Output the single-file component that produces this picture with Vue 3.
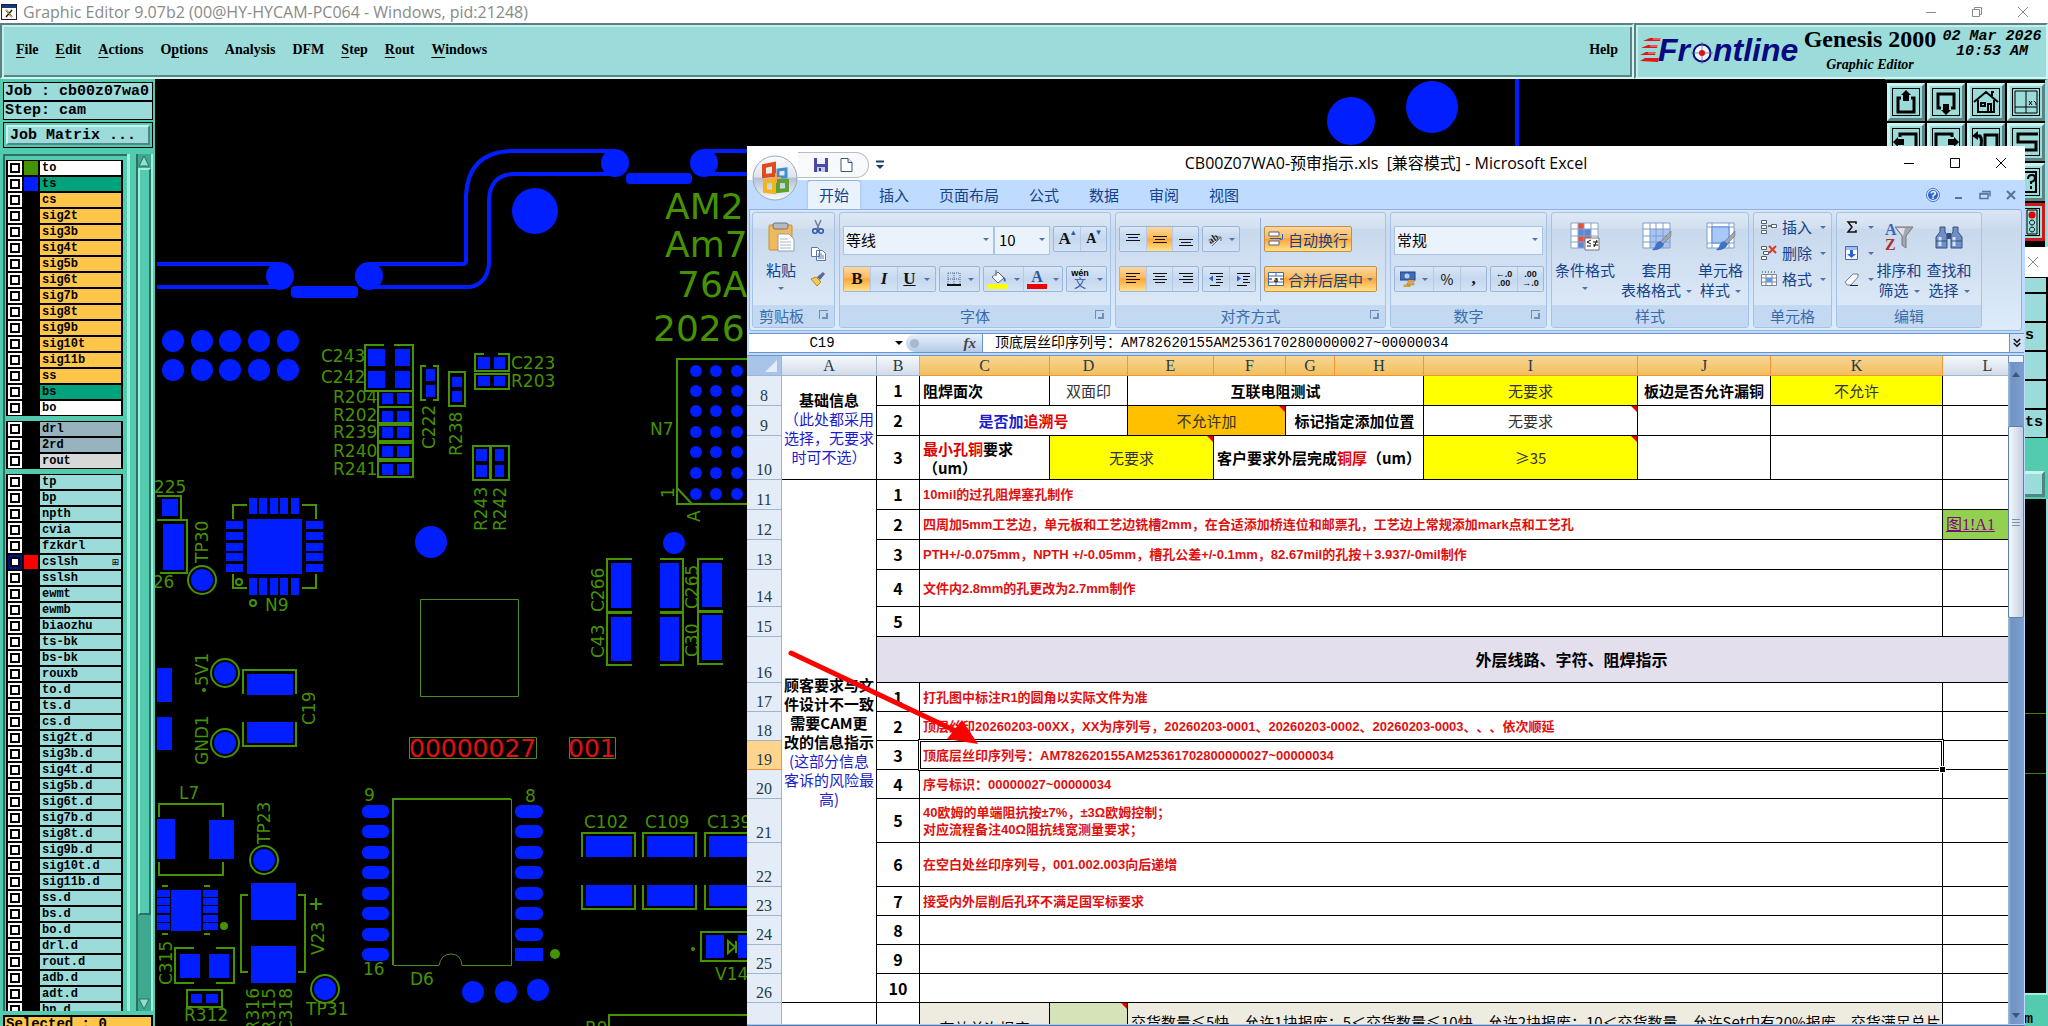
<template>
  <div class="desktop">
    <header class="titlebar">
      <svg class="titlebar-icon" viewBox="0 0 16 16"><rect x="0.500" y="0.500" width="15" height="15" fill="#fff" stroke="#222" /><path d="M1 2.500h14" stroke="#123a8a" stroke-width="3" /><path d="M5 6l6 7M11 6l-6 7" stroke="#222" stroke-width="1.500" /><path d="M5 6l6 7" stroke="#e8d800" stroke-width="1" /></svg>
      <span class="titlebar-text">Graphic Editor 9.07b2 (00@HY-HYCAM-PC064 - Windows, pid:21248)</span>
      <div class="win-controls win-controls-muted">
        <button type="button" aria-label="Minimize"><svg viewBox="0 0 12 12"><path d="M1 6.500h10" /></svg></button>
        <button type="button" aria-label="Restore"><svg viewBox="0 0 12 12"><path d="M3.500 3.500v-2h7v7h-2M1.500 3.500h7v7h-7z" /></svg></button>
        <button type="button" aria-label="Close"><svg viewBox="0 0 12 12"><path d="M1 1l10 10M11 1L1 11" /></svg></button>
      </div>
    </header>

    <div class="menubar">
      <nav class="menu-panel">
        <button v-for="m in menus" :key="m.name" type="button" class="menu-item">{{ m.before }}<u v-if="m.key">{{ m.key }}</u>{{ m.after }}</button>
        <button type="button" class="menu-item menu-help">Help</button>
      </nav>
      <div class="brand-panel">
        <svg class="brand-logo" viewBox="0 -4 162 40">
          <path d="M21 3H10L3 6h17zM18 10H8l-7 3h16zM16 17H6l-6 3h15zM14 23H5l-5 3 18 1 1-4z" fill="#e01818" />
          <path d="M13 4h8M10 11h8M8 18h8" stroke="#fff" stroke-width="0.600" />
          <text x="18" y="26">Fr</text>
          <circle cx="62" cy="18" r="8.500" fill="#e8f6f6" stroke="#0a0a80" stroke-width="2" />
          <path d="M62 7v22M51 18h22" stroke="#5a5ab0" stroke-width="0.700" />
          <circle cx="62" cy="18" r="3" fill="#e01010" />
          <text x="73" y="26">ntline</text>
        </svg>
        <div class="brand-name">
          <strong>Genesis 2000</strong>
          <em>Graphic Editor</em>
        </div>
        <div class="brand-date">02 Mar 2026<br>10:53 AM</div>
      </div>
    </div>

    <div class="workspace">
      <aside class="side">
        <div class="side-box">Job : cb00z07wa0</div>
        <div class="side-box">Step: cam</div>
        <div class="side-matrix"><button type="button">Job Matrix ...</button></div>
        <div class="side-layers">
          <div class="layer-frame">
            <div class="layer-list">
              <div v-for="(group, g) in layerGroups" :key="g" class="layer-group">
                <label v-for="layer in group" :key="layer.name" class="layer">
                  <span class="layer-check" :class="{ 'layer-check-on': layer.active }"><input type="checkbox"></span>
                  <span class="layer-swatch" :style="{ background: layer.swatch }"></span>
                  <span class="layer-name" :class="'layer-' + layer.type">{{ layer.name }}<i v-if="layer.active">⊞</i></span>
                </label>
              </div>
            </div>
          </div>
          <div class="side-scroll">
            <svg viewBox="0 0 12 12"><path d="M6 1L1 11h10z" fill="#8fe0cc" stroke="#2e6f60" /></svg>
            <div class="side-thumb"></div>
            <div class="side-trough"></div>
            <svg viewBox="0 0 12 12"><path d="M1 1h10L6 11z" fill="#8fe0cc" stroke="#2e6f60" /></svg>
          </div>
        </div>
        <div class="side-status">Selected : 0</div>
      </aside>

      <!-- board view, drawn in screen coordinates -->
      <svg class="board">
        <g transform="translate(-155 -79)">
          <g class="trace">
            <path d="M157 264H280M370 264H463Q466 264 466 260V196Q468 152 512 151H612M157 287H280M370 287H470Q487 284 489 264V200Q490 175 513 174H612M704 151H760M704 174H760" />
            <path d="M1517 79V160" />
          </g>
          <g class="pad">
            <rect v-for="(r, i) in pads" :key="'p' + i" :x="r[0]" :y="r[1]" :width="r[2] - r[0]" :height="r[3] - r[1]" />
            <circle v-for="(c, i) in dots" :key="'d' + i" :cx="c[0]" :cy="c[1]" :r="c[2]" />
            <rect x="291" y="286" width="67" height="12" rx="4" />
            <rect x="626" y="173" width="66" height="11" rx="4" />
            <template v-for="(y, i) in dipRows" :key="'dip' + i">
              <rect x="362" :y="y - 6" width="27" height="13" rx="6" />
              <rect x="515" :y="y - 6" width="28" height="13" :rx="i === 7 ? 0 : 6" />
            </template>
          </g>
          <g class="silk">
            <path v-for="(d, i) in silk" :key="'s' + i" :d="d" />
            <circle v-for="(c, i) in testPoints" :key="'t' + i" :cx="c[0]" :cy="c[1]" r="14" />
            <circle cx="239" cy="582" r="3" />
            <circle cx="253" cy="603" r="3" />
          </g>
          <g class="silk-thin">
            <path d="M420.500 599.500H518.500V696.500H420.500zM409.500 737.500H536.500V758.500H409.500zM569.500 737.500H615.500V758.500H569.500zM393.500 965.500H439Q441 954 451 954T462 965.500H511.500V799" />
          </g>
          <g class="silk-fill">
            <circle cx="204" cy="690" r="2" />
            <circle cx="224" cy="926" r="4" />
            <circle cx="555" cy="954" r="5" />
            <circle cx="693" cy="949" r="2" />
            <text v-for="l in boardTitles" :key="l[0]" class="board-title" :x="l[1]" :y="l[2]">{{ l[0] }}</text>
            <text v-for="(l, i) in labels" :key="'l' + i" :x="l[1]" :y="l[2]">{{ l[0] }}</text>
            <text v-for="(l, i) in verticalLabels" :key="'v' + i" :transform="`translate(${l[1]} ${l[2]}) rotate(-90)`" :text-anchor="l[3] || 'start'">{{ l[0] }}</text>
          </g>
          <g class="serial">
            <text x="409" y="757">00000027</text>
            <text x="568" y="757">001</text>
          </g>
        </g>
      </svg>

      <aside class="tools">
        <div class="tool-grid">
          <button v-for="(icon, i) in toolIcons" :key="i" type="button" class="tool" :class="{ 'tool-red': i === 15 }" :aria-label="icon.name">
            <svg viewBox="0 0 28 28"><rect x="0.500" y="0.500" width="27" height="27" fill="none" stroke="#000" /><path :d="icon.line" fill="none" stroke="#000" :stroke-width="icon.w || 2" /><path :d="icon.solid" fill="#000" /><circle v-if="i === 15" cx="20" cy="7" r="3.500" fill="#e00000" /></svg>
          </button>
        </div>
        <div class="popup-title"><button type="button" aria-label="Close popup"><svg viewBox="0 0 12 12"><path d="M1 1l10 10M11 1L1 11" /></svg></button></div>
        <div class="popup-rows">
          <div class="popup-row popup-row-short"></div>
          <div class="popup-row"></div>
          <div class="popup-row"><span>s</span></div>
          <div class="popup-row"></div>
          <div class="popup-row"></div>
          <div class="popup-row"><span>ts</span></div>
        </div>
        <div class="popup-foot"><button type="button" aria-label="Apply"></button></div>
        <div class="tools-board"><svg><path d="M0 214.500H163M0 274.500H163" stroke="#3f7d10" /></svg></div>
        <div class="tools-foot"><span>m</span></div>
      </aside>
    </div>

    <section class="excel">
      <div class="x-title">
        <button type="button" class="office" aria-label="Office">
          <svg viewBox="0 0 46 46">
            <defs>
              <linearGradient id="orb" x1="0" y1="0" x2="0" y2="1"><stop offset="0" stop-color="#fdfdfe" /><stop offset="0.480" stop-color="#dfe4ec" /><stop offset="0.500" stop-color="#b6c0d2" /><stop offset="1" stop-color="#f6fafe" /></linearGradient>
            </defs>
            <circle cx="23" cy="23" r="22" fill="url(#orb)" stroke="#9aa7bd" />
            <path d="M12 11l10-2v11l-10 1z" fill="none" stroke="#dd4b1e" stroke-width="4" />
            <path d="M26 15l8-1v8h-8z" fill="none" stroke="#3c8fd0" stroke-width="3" />
            <path d="M13 26h9v11l-9-1z" fill="none" stroke="#f0b41c" stroke-width="4" />
            <path d="M26 26h9v9l-9 1z" fill="none" stroke="#5da032" stroke-width="4" />
            <path d="M19 23h10M24 18v10" stroke="#f4a060" stroke-width="2" />
          </svg>
        </button>
        <div class="qat">
          <button type="button" aria-label="Save"><svg viewBox="0 0 16 16"><path d="M1 1h14v14H1z" fill="#4a49a8" /><path d="M4 1h8v6H4z" fill="#eef2fb" /><path d="M4 10h8v5H4z" fill="#c4c8e4" /><path d="M6 11h2v3H6z" fill="#33337f" /></svg></button>
          <button type="button" aria-label="New"><svg viewBox="0 0 16 16"><path d="M3 1.500h7l4 4v9H3z" fill="#fff" stroke="#3d5579" /><path d="M10 1.500v4h4" fill="#dbe4ef" stroke="#3d5579" /></svg></button>
        </div>
        <button type="button" class="qat-more" aria-label="Customize"><svg viewBox="0 0 10 10"><path d="M1 1.500h8" stroke="#1c3a70" stroke-width="2" /><path d="M1 5h8L5 9z" fill="#1c3a70" /></svg></button>
        <span class="x-title-text">CB00Z07WA0-预审指示.xls&nbsp; [兼容模式] - Microsoft Excel</span>
        <div class="win-controls">
          <button type="button" aria-label="Minimize Excel"><svg viewBox="0 0 12 12"><path d="M1 6.500h10" /></svg></button>
          <button type="button" aria-label="Maximize Excel"><svg viewBox="0 0 12 12"><path d="M1.500 1.500h9v9h-9z" /></svg></button>
          <button type="button" aria-label="Close Excel"><svg viewBox="0 0 12 12"><path d="M1 1l10 10M11 1L1 11" /></svg></button>
        </div>
      </div>

      <div class="x-tabs">
        <button v-for="(t, i) in tabs" :key="t" type="button" class="x-tab" :class="{ 'x-tab-on': i === 0 }">{{ t }}</button>
        <div class="x-tabs-right">
          <svg viewBox="0 0 14 14"><circle cx="7" cy="7" r="6.500" fill="#eaf2fd" stroke="#4472c4" /><circle cx="7" cy="7" r="5" fill="#2a62d0" /><text x="7" y="11" text-anchor="middle" font-size="11" font-weight="bold" fill="#fff" font-family="Liberation Sans">?</text></svg>
          <svg viewBox="0 0 14 14"><path d="M3 10h7" stroke="#5c7393" stroke-width="2" /></svg>
          <svg viewBox="0 0 14 14"><path d="M4 3.500h8v5M2 5.500h8v5H2zM2 6h8" stroke="#5c7393" stroke-width="1.500" fill="none" /></svg>
          <svg viewBox="0 0 14 14"><path d="M3 3l8 8M11 3l-8 8" stroke="#5c7393" stroke-width="2" /></svg>
        </div>
      </div>

      <div class="ribbon">
        <div class="group group-clip">
          <div class="group-body">
            <button type="button" class="big">
              <svg class="icon-big" viewBox="0 0 30 30"><rect x="3" y="3" width="23" height="25" rx="1" fill="#f0b95a" stroke="#c98f35" /><rect x="7" y="1" width="15" height="6" rx="2" fill="#b5b9c0" stroke="#6c7480" /><path d="M12 12h11l5 5v12H12z" fill="#fff" stroke="#8fa0b8" /><path d="M14 17h8M14 20h11M14 23h11M14 26h11" stroke="#a9b8cf" /></svg>
              <span>粘贴</span><i class="caret"></i>
            </button>
            <div class="small-col">
              <button type="button" aria-label="剪切"><svg class="icon" viewBox="0 0 16 16"><path d="M5 1l4 9M11 1L7 10" stroke="#6f7e96" stroke-width="1.500" /><circle cx="5" cy="12" r="2.300" fill="none" stroke="#2d55a8" stroke-width="1.500" /><circle cx="11" cy="12" r="2.300" fill="none" stroke="#2d55a8" stroke-width="1.500" /></svg></button>
              <button type="button" aria-label="复制"><svg class="icon" viewBox="0 0 16 16"><path d="M1.500 2.500h6l2 2v7h-8zM6.500 5.500h6l3 3v7h-9z" fill="#fff" stroke="#5577ad" /><path d="M8 9h4M8 11h6M8 13h6" stroke="#5577ad" /></svg></button>
              <button type="button" aria-label="格式刷"><svg class="icon" viewBox="0 0 16 16"><path d="M1 8l5-2 5 5-4 4z" fill="#f3cb4e" stroke="#b5862a" /><path d="M7 6l6-5 2 2-5 6z" fill="#5d6798" /></svg></button>
            </div>
          </div>
          <div class="group-label">剪贴板<i class="launcher"></i></div>
        </div>

        <div class="group group-font">
          <div class="group-body group-rows">
            <div class="tool-row">
              <div class="combo-pair">
                <div class="combo combo-font"><select aria-label="字体"><option>等线</option></select><i class="caret"></i></div>
                <div class="combo combo-size"><select aria-label="字号"><option>10</option></select><i class="caret"></i></div>
              </div>
              <div class="bar"><button type="button" class="b26 serif">A<sup>▴</sup></button><button type="button" class="b26 serif serif-s">A<sup>▾</sup></button></div>
            </div>
            <div class="tool-row">
              <div class="bar"><button type="button" class="b26 serif on">B</button><button type="button" class="b28 serif"><em>I</em></button><button type="button" class="b38 serif"><u>U</u><i class="caret"></i></button></div>
              <div class="bar"><button type="button" class="b39" aria-label="边框"><svg class="icon" viewBox="0 0 16 16"><path d="M2 2h12M2 8h12M2 2v11M8 2v11M14 2v11" stroke="#4f6284" stroke-dasharray="1 1" /><path d="M1 14h14" stroke="#111" stroke-width="2" /></svg><i class="caret"></i></button></div>
              <div class="bar">
                <button type="button" class="b39" aria-label="填充"><svg class="icon-w" viewBox="0 0 20 20"><path d="M4 8l6-5 6 6-6 5z" fill="#fff" stroke="#56657d" /><path d="M16 8q3 3 1 5-2-1-1-5" fill="#2864c8" /><path d="M8 1v6" stroke="#56657d" /><path d="M0 15h20v5H0z" fill="#ffff00" /></svg><i class="caret"></i></button>
                <button type="button" class="b39" aria-label="字体颜色"><svg class="icon-w" viewBox="0 0 20 20"><text x="10" y="13" text-anchor="middle" font-size="16" font-weight="bold" font-family="Liberation Serif" fill="#2f5597">A</text><path d="M0 15h20v5H0z" fill="#ee0000" /></svg><i class="caret"></i></button>
              </div>
              <div class="bar"><button type="button" class="b39" aria-label="拼音"><svg class="icon-w" viewBox="0 0 20 20"><text x="9" y="7" text-anchor="middle" font-size="9" font-weight="bold" font-family="Liberation Sans">wén</text><text x="9" y="19" text-anchor="middle" font-size="12" font-family="Noto Sans CJK SC" fill="#3050b8">文</text></svg><i class="caret"></i></button></div>
            </div>
          </div>
          <div class="group-label">字体<i class="launcher"></i></div>
        </div>

        <div class="group group-align">
          <div class="group-body">
            <div class="group-rows">
              <div class="tool-row">
                <div class="bar">
                  <button v-for="(d, i) in valignIcons" :key="i" type="button" class="b26" :class="{ on: i === 1 }" :aria-label="'垂直对齐' + i"><svg class="icon" viewBox="0 0 16 16"><path :d="d" stroke="#111" stroke-width="1" /></svg></button>
                </div>
                <div class="bar"><button type="button" class="b36" aria-label="方向"><svg class="icon" viewBox="0 0 16 16"><text x="1" y="11" font-size="10" transform="rotate(-35 6 8)" font-family="Liberation Serif" font-weight="bold" fill="#222">ab</text><path d="M5 15l9-9M14 6v4M14 6h-4" stroke="#5a6c88" fill="none" /></svg><i class="caret"></i></button></div>
              </div>
              <div class="tool-row">
                <div class="bar">
                  <button v-for="(d, i) in halignIcons" :key="i" type="button" class="b26" :class="{ on: i === 0 }" :aria-label="'水平对齐' + i"><svg class="icon" viewBox="0 0 16 16"><path :d="d" stroke="#111" stroke-width="1" /></svg></button>
                </div>
                <div class="bar">
                  <button type="button" class="b26" aria-label="减少缩进"><svg class="icon" viewBox="0 0 16 16"><path d="M2 2.500h13M8 5.500h7M8 8.500h5M8 11.500h7M2 14.500h10" stroke="#111" /><path d="M1 7.500l4-3v6z" fill="#2a5cc4" /></svg></button>
                  <button type="button" class="b26" aria-label="增加缩进"><svg class="icon" viewBox="0 0 16 16"><path d="M2 2.500h13M8 5.500h7M8 8.500h5M8 11.500h7M2 14.500h10" stroke="#111" /><path d="M6 7.500l-4-3v6z" fill="#2a5cc4" /></svg></button>
                </div>
              </div>
            </div>
            <div class="group-rows group-divided">
              <div class="tool-row"><button type="button" class="wide on"><svg class="icon" viewBox="0 0 16 16"><path d="M1 1h10v4H1zM1 10h10v4H1z" fill="#fff" stroke="#56657d" /><path d="M2 7.500h11M14.500 3v5l-3 1" stroke="#2a5cc4" fill="none" /></svg>自动换行</button></div>
              <div class="tool-row"><button type="button" class="wide on"><svg class="icon" viewBox="0 0 16 16"><path d="M.5 1.500h15v13H.5zM.5 5h15M.5 11h15M8 1.500V5M8 11v3.500" fill="#fff" stroke="#4469a6" /><text x="8" y="10.500" text-anchor="middle" font-size="8" font-weight="bold" font-family="Liberation Serif">a</text><path d="M1 8h3M15 8h-3" stroke="#111" /></svg>合并后居中<i class="caret"></i></button></div>
            </div>
          </div>
          <div class="group-label">对齐方式<i class="launcher"></i></div>
        </div>

        <div class="group group-number">
          <div class="group-body group-rows">
            <div class="tool-row"><div class="combo combo-number"><select aria-label="数字格式"><option>常规</option></select><i class="caret"></i></div></div>
            <div class="tool-row">
              <div class="bar">
                <button type="button" class="b38" aria-label="货币"><svg class="icon" viewBox="0 0 16 16"><rect y="1" width="15" height="8" fill="#3f6bbd" stroke="#26437e" /><circle cx="7" cy="5" r="2.500" fill="#bcd0ef" /><path d="M8 9h6v2H8zM7 12h7v2H7zM4 14h6v2H4z" fill="#e9b23a" stroke="#a5761b" stroke-width="0.500" /></svg><i class="caret"></i></button>
                <button type="button" class="b28">%</button>
                <button type="button" class="b26 serif">,</button>
              </div>
              <div class="bar">
                <button type="button" class="b26 decimals"><span>←.0</span><span>.00</span></button>
                <button type="button" class="b26 decimals"><span>.00</span><span>→.0</span></button>
              </div>
            </div>
          </div>
          <div class="group-label">数字<i class="launcher"></i></div>
        </div>

        <div class="group group-style">
          <div class="group-body group-bigs">
            <button type="button" class="big">
              <svg class="icon-big" viewBox="0 0 30 30"><path d="M1 1h27v25H1z" fill="#fff" /><path d="M8 1h6v6H8zM8 14h13v6H8z" fill="#e8503c" /><path d="M8 7h13v7H8zM8 20h6v6H8z" fill="#5b87d8" /><path d="M1 1h27v25H1zM1 7h27M1 14h27M1 20h27M8 1v25M14 1v25M21 1v25" fill="none" stroke="#8aa2c8" /><path d="M15 16h14v12H15z" fill="#fff" stroke="#777" /><path d="M21 18l-4 2 4 2M17 24h4M23 20h5M23 23h5M27 18l-3 7" fill="none" stroke="#111" /></svg>
              <span>条件格式</span><i class="caret"></i>
            </button>
            <button type="button" class="big">
              <svg class="icon-big" viewBox="0 0 30 30"><path d="M1 1h27v25H1z" fill="#fff" /><path d="M8 7h20v19H8z" fill="#a9c4f2" /><path d="M1 1h27v25H1zM1 7h27M1 14h27M1 20h27M8 1v25M14 1v25M21 1v25" fill="none" stroke="#7f9ccb" /><path d="M29 9L18 20l3 2 8-8z" fill="#a0a6ae" stroke="#666" stroke-width="0.500" /><path d="M18 19q-4 1-5 6l-3 3q9 1 12-6z" fill="#3f72c4" /></svg>
              <span>套用<br>表格格式<i class="caret"></i></span>
            </button>
            <button type="button" class="big">
              <svg class="icon-big" viewBox="0 0 30 30"><path d="M1 1h27v25H1z" fill="#fff" /><path d="M1 1h27v25H1zM1 5h27M1 21h27M6 1v25M23 1v25" fill="none" stroke="#7f9ccb" /><path d="M6 5h17v16H6z" fill="#a9c8fa" stroke="#5b87d8" /><path d="M29 9L18 20l3 2 8-8z" fill="#a0a6ae" stroke="#666" stroke-width="0.500" /><path d="M18 19q-4 1-5 6l-3 3q9 1 12-6z" fill="#3f72c4" /></svg>
              <span>单元格<br>样式<i class="caret"></i></span>
            </button>
          </div>
          <div class="group-label">样式</div>
        </div>

        <div class="group group-cells">
          <div class="group-body">
            <div class="small-col small-col-text">
              <button type="button"><svg class="icon" viewBox="0 0 16 16"><path d="M.5 1.500h5v3h-5zM.5 6.500h5v3h-5zM.5 11.500h5v3h-5zM10.500 5.500h5v3h-5z" fill="#fff" stroke="#555f70" /><path d="M7 7h3" stroke="#111" /></svg>插入<i class="caret"></i></button>
              <button type="button"><svg class="icon" viewBox="0 0 16 16"><path d="M.5 1.500h5v3h-5zM2.500 6.500h5v3h-5zM.5 11.500h5v3h-5z" fill="#fff" stroke="#555f70" /><path d="M8 1l7 7M15 1L8 8" stroke="#e03a20" stroke-width="2" /></svg>删除<i class="caret"></i></button>
              <button type="button"><svg class="icon" viewBox="0 0 16 16"><path d="M.5 3.500h15v11H.5zM.5 7h15M.5 11h15M5 3.500v11M11 3.500v11" fill="#fff" stroke="#7a8596" /><path d="M5 7h6v4H5z" fill="#5b9bf0" /><path d="M1 1h14" stroke="#333" stroke-dasharray="1 2" /></svg>格式<i class="caret"></i></button>
            </div>
          </div>
          <div class="group-label">单元格</div>
        </div>

        <div class="group group-edit">
          <div class="group-body">
            <div class="small-col small-col-text">
              <button type="button" aria-label="求和"><svg class="icon" viewBox="0 0 16 16"><path d="M12 5V3H4l4 5-4 5h8v-2" fill="none" stroke="#111" stroke-width="1.500" /></svg><i class="caret"></i></button>
              <button type="button" aria-label="填充序列"><svg class="icon" viewBox="0 0 16 16"><path d="M1.500 1.500h12v13h-12z" fill="#fff" stroke="#4469a6" /><path d="M2 2h11v3H2z" fill="#9dbdf0" /><path d="M6 5h3v4h3l-4.500 4L3 9h3z" fill="#2a62d0" /></svg><i class="caret"></i></button>
              <button type="button" aria-label="清除"><svg class="icon" viewBox="0 0 16 16"><path d="M1 11l8-8h5v3l-7 8H3z" fill="#f4f6fa" stroke="#777f8d" /><path d="M6 14.500h8" stroke="#222" /></svg><i class="caret"></i></button>
            </div>
            <button type="button" class="big">
              <svg class="icon-big" viewBox="0 0 30 30"><text x="1" y="13" font-size="16" font-weight="bold" font-family="Liberation Serif" fill="#3a66b4">A</text><text x="1" y="28" font-size="16" font-weight="bold" font-family="Liberation Serif" fill="#b03030">Z</text><path d="M11 5h18l-7 9v12l-4-3v-9z" fill="#a4a8ae" stroke="#76797e" /><path d="M13 6h8l-2 8z" fill="#dfe1e4" /></svg>
              <span>排序和<br>筛选<i class="caret"></i></span>
            </button>
            <button type="button" class="big">
              <svg class="icon-big" viewBox="0 0 30 30"><path d="M6 5h5v5l2 3v13H2V15l4-5zM24 5h-5v5l-2 3v13h11V15l-4-5z" fill="#6f8fc6" stroke="#33507f" /><path d="M13 11h4v6h-4z" fill="#33507f" /><path d="M6 15v9M20 15v9" stroke="#d5e1f5" stroke-width="3" /><path d="M2 19h11M17 19h11" stroke="#33507f" /></svg>
              <span>查找和<br>选择<i class="caret"></i></span>
            </button>
          </div>
          <div class="group-label">编辑</div>
        </div>
      </div>

      <div class="formula-bar">
        <div class="name-box"><input type="text" value="C19" aria-label="名称框"><i class="caret caret-dark"></i></div>
        <div class="fx"><b></b><em>fx</em></div>
        <input class="formula" type="text" aria-label="编辑栏" value="顶底层丝印序列号：AM782620155AM25361702800000027~00000034">
        <button type="button" class="formula-more" aria-label="展开编辑栏"><svg viewBox="0 0 10 12"><path d="M1 1l4 4 4-4M1 6l4 4 4-4" fill="none" stroke="#111" stroke-width="2" /></svg></button>
      </div>

      <div class="sheet">
        <div class="grid-area">
          <table class="grid">
            <colgroup>
              <col v-for="(w, i) in colWidths" :key="i" :style="{ width: w ? w + 'px' : 'auto' }">
            </colgroup>
            <thead>
              <tr>
                <th class="corner"><i></i></th>
                <th v-for="c in columns" :key="c" :class="{ picked: c > 'B' && c < 'L' }">{{ c }}</th>
              </tr>
            </thead>
            <tbody>
              <tr v-for="row in rows" :key="row.n" :style="{ height: row.h + 'px' }">
                <th :class="{ picked: row.n === 19 }">{{ row.n < 27 ? row.n : '' }}</th>
                <td v-for="(cell, i) in row.cells" :key="i" :colspan="cell.span || 1" :rowspan="cell.rows || 1" :class="cell.cls">
                  <a v-if="cell.link" href="#">{{ cell.link }}</a>
                  <span v-for="(p, k) in cell.parts" :key="k" :class="p[1]">{{ p[0] }}</span>
                </td>
              </tr>
            </tbody>
          </table>
          <svg class="arrow" viewBox="0 0 200 100">
            <path d="M5 6L172 85" stroke="#f00" stroke-width="5" stroke-linecap="round" />
            <path d="M192 97L161 92L176 73z" fill="#f00" />
          </svg>
        </div>
        <div class="vscroll">
          <div class="vscroll-split"></div>
          <div class="vscroll-up"></div>
          <div class="vscroll-thumb"><i></i></div>
          <div class="vscroll-down"></div>
        </div>
      </div>
      <div class="sheet-tabs"></div>
    </section>
  </div>
</template>

<script setup>
const menus = [
  { name: 'File', key: 'F', after: 'ile' },
  { name: 'Edit', key: 'E', after: 'dit' },
  { name: 'Actions', key: 'A', after: 'ctions' },
  { name: 'Options', before: 'O', key: 'p', after: 'tions' },
  { name: 'Analysis', after: 'Analysis' },
  { name: 'DFM', after: 'DFM' },
  { name: 'Step', key: 'S', after: 'tep' },
  { name: 'Rout', key: 'R', after: 'out' },
  { name: 'Windows', key: 'W', after: 'indows' }
]

const make = (names, type) => names.split(' ').map(name => ({ name, type, swatch: '#000' }))

const layerGroups = [
  [
    { name: 'to', type: 'white', swatch: '#459203' },
    { name: 'ts', type: 'green', swatch: '#001eff' },
    ...make('cs sig2t sig3b sig4t sig5b sig6t sig7b sig8t sig9b sig10t sig11b ss', 'amber'),
    ...make('bs', 'green'),
    ...make('bo', 'white')
  ],
  [...make('drl 2rd', 'slate'), ...make('rout', 'grey')],
  [
    ...make('tp bp npth cvia fzkdrl', 'teal'),
    { name: 'cslsh', type: 'teal', swatch: '#f00', active: true },
    ...make('sslsh ewmt ewmb biaozhu ts-bk bs-bk rouxb to.d ts.d cs.d sig2t.d sig3b.d sig4t.d sig5b.d sig6t.d sig7b.d sig8t.d sig9b.d sig10t.d sig11b.d ss.d bs.d bo.d drl.d rout.d adb.d adt.d bn.d', 'teal')
  ]
]

// board: pads are [left, top, right, bottom]
const pads = [
  [368, 349, 385, 366], [395, 349, 410, 366], [368, 371, 385, 388], [395, 371, 410, 388],
  [426, 369, 435, 381], [426, 385, 435, 397], [452, 377, 462, 387], [452, 391, 462, 402],
  [478, 357, 490, 369], [494, 357, 505, 369], [478, 376, 490, 386], [494, 376, 505, 386],
  [476, 449, 487, 461], [476, 465, 487, 477], [495, 449, 504, 461], [495, 465, 504, 477],
  ...[393, 411, 427, 446, 464].flatMap(y => [[382, y, 393, y + 11], [397, y, 409, y + 11]]),
  [162, 499, 178, 516], [163, 524, 184, 570],
  [247, 519, 302, 574],
  ...[249, 259, 270, 280, 291].flatMap(x => [[x, 498, x + 8, 514], [x, 578, x + 8, 595]]),
  ...[521, 532, 543, 553, 564].flatMap(y => [[226, y, 243, y + 8], [306, y, 323, y + 8]]),
  [611, 563, 631, 608], [611, 617, 631, 661], [660, 563, 679, 608], [660, 617, 679, 661], [702, 563, 722, 607], [702, 615, 722, 660],
  [247, 674, 293, 695], [247, 722, 293, 743], [157, 668, 172, 702], [157, 717, 172, 750],
  [157, 819, 175, 859], [209, 820, 234, 859],
  [171, 890, 201, 931],
  ...[890, 898, 906, 915, 923].flatMap(y => [[157, y, 170, y + 7], [203, y, 218, y + 7]]),
  [180, 954, 200, 978], [209, 954, 229, 978], [191, 994, 202, 1003], [206, 994, 218, 1003],
  [251, 883, 296, 920], [251, 946, 296, 983],
  ...[586, 647, 709].flatMap(x => [[x, 836, x + 46, 857], [x, 885, x + 46, 906]]),
  [706, 935, 724, 958], [738, 935, 756, 958]
]

const testPoints = [[202, 580], [225, 673], [225, 743], [264, 860], [325, 989]]

const dots = [
  [280, 276, 14], [369, 276, 14], [615, 163, 14], [704, 163, 14], [535, 211, 23], [1351, 121, 24], [1432, 107, 26],
  ...[341, 370].flatMap(y => [173, 202, 230, 259, 288].map(x => [x, y, 11])),
  ...[371, 391, 411, 432, 452, 473, 494].flatMap(y => [696, 716, 737].map(x => [x, y, 6])),
  [431, 542, 16], [674, 543, 11], [473, 992, 11], [506, 992, 11], [538, 990, 11],
  ...testPoints.map(p => [p[0], p[1], 11])
]

const dipRows = [811, 831, 852, 872, 893, 913, 934, 954]

const silk = [
  'M384 345H365V391H381M394 345H413V391H397',
  ...[391, 407, 425, 443, 461].map(y => `M378 ${y}H413V${y + 16}H378z`),
  'M426 366H421V400H426M433 366H438V400H433M449 372H465V406H449z',
  'M484 354H475V371H509V354H498M475 374H509V389H475z',
  'M473 446H490V480H473zM491 446H509V480H491z',
  'M760 359H677V504H760M677 488L692 504',
  'M157 496H181V519M157 520H187V573H160',
  'M233 519V505H247M302 505H316V519M316 574V588H302M247 588H233V574',
  'M632 559H607V612H632M632 613H607V665H632',
  'M660 559H683V612H660M660 613H683V665H660',
  'M723 559H698V611H723M723 612H698V664H723',
  'M243 694V670H296V694M243 722V746H296V722',
  'M159 817V804H223V817M159 862V875H223V862',
  'M162 886H168M204 886H210M162 934H168M204 934H210',
  'M194 948H175V983H194M216 948H234V983H216',
  'M187 990H222V1007H187z',
  'M248 895H241V972H248M298 895H305V972H298M310 904H322M316 898V910',
  'M393 965V799H511',
  ...[582, 643, 705].map(x => `M${x} 857V833H${x + 53}V857M${x} 885V909H${x + 53}V885`),
  'M760 932H701V961H760M728 941V953L735 947zM736 941V953',
  'M609 1030V1015H760'
]

const boardTitles = [['AM2', 665, 219], ['Am7', 665, 257], ['76A', 677, 297], ['2026', 653, 341]]

const labels = [
  ['C243', 321, 362], ['C242', 321, 383], ['R204', 333, 403], ['R202', 333, 421], ['R239', 333, 438], ['R240', 333, 457], ['R241', 333, 475],
  ['C223', 511, 369], ['R203', 511, 387], ['N7', 650, 435], ['C225', 142, 493], ['C226', 130, 588], ['N9', 265, 611],
  ['L7', 179, 799], ['9', 364, 801], ['8', 525, 802], ['16', 363, 975], ['D6', 410, 985],
  ['C102', 584, 828], ['C109', 645, 828], ['C139', 707, 828], ['V14', 715, 980], ['R312', 184, 1021], ['TP31', 306, 1015], ['R9', 585, 1034]
]

const verticalLabels = [
  ['C222', 435, 449], ['R238', 462, 456], ['R243', 487, 531], ['R242', 506, 531], ['1', 674, 498], ['A', 700, 522],
  ['TP30', 208, 563], ['C266', 604, 612], ['C43', 604, 658], ['C265', 698, 609], ['C30', 698, 657],
  ['5V1', 208, 686], ['C19', 315, 725], ['GND1', 208, 765], ['TP23', 270, 844], ['C315', 172, 985], ['V23', 324, 955],
  ['R316', 259, 988, 'end'], ['R315', 275, 988, 'end'], ['C318', 292, 988, 'end']
]

const toolIcons = [
  { name: 'pan up', line: 'M9 10H6v14h16V10h-3', w: 3, solid: 'M14 2l5 5h-2v6h-6V7H9z' },
  { name: 'pan down', line: 'M9 20H6V6h16v14h-3', w: 3, solid: 'M14 27l5-5h-2v-6h-6v6H9z' },
  { name: 'home', line: 'M2 14L14 4l12 10M6 12v12h16V12M9 15h4v3H9zM16 24v-8h3v8M20 8V4h2', w: 2, solid: 'M0 0' },
  { name: 'window', line: 'M3 3h22v22H3zM14 3v22M3 19h22M17 13l3 4M20 13l-3 4M22 13l2 2v2', w: 1, solid: 'M0 0' },
  { name: 'pan left', line: 'M8 9V6h16v16H8v-3', w: 3, solid: 'M1 14l5-5v2h6v6H6v2z' },
  { name: 'pan right', line: 'M20 9V6H4v16h16v-3', w: 3, solid: 'M27 14l-5-5v2h-6v6h6v2z' },
  { name: 'previous', line: 'M13 7h12v16H13zM4 8h4q3 4 0 14', w: 3, solid: 'M0 8l6-5v9z' },
  { name: 'route', line: 'M26 6H6v8h18v8H4', w: 3, solid: 'M0 0' },
  ...['a', 'b', 'c'].map(n => ({ name: 'tool ' + n, line: 'M6 6h16v16H6z', solid: 'M0 0' })),
  { name: 'help', line: 'M4 4h20v20H4zM16 11q0-4 4-4 3 0 3 3t-4 4v2M19 18v3', solid: 'M0 0' },
  ...['d', 'e', 'f'].map(n => ({ name: 'tool ' + n, line: 'M6 6h16v16H6z', solid: 'M0 0' })),
  { name: 'stop', line: 'M15 2h10v24H15zM20 12a2.500 2.500 0 1 0 .1 0M20 19a2.500 2.500 0 1 0 .1 0', w: 1, solid: 'M0 0' }
]

const tabs = ['开始', '插入', '页面布局', '公式', '数据', '审阅', '视图']

const valignIcons = ['M1 3.500h14M3 6.500h10M1 9.500h14', 'M1 5.500h14M3 8.500h10M1 11.500h14', 'M1 8.500h14M3 11.500h10M1 14.500h14']
const halignIcons = [
  'M1 2.500h14M1 5.500h10M1 8.500h14M1 11.500h10',
  'M1 2.500h14M3 5.500h10M1 8.500h14M3 11.500h10',
  'M1 2.500h14M5 5.500h10M1 8.500h14M5 11.500h10'
]

const columns = ['A', 'B', 'C', 'D', 'E', 'F', 'G', 'H', 'I', 'J', 'K', 'L']
const colWidths = [35, 95, 43, 130, 78, 86, 72, 49, 89, 214, 133, 172, 0]

const cell = (text, cls = '', span = 1) => ({ parts: [[text, '']], cls, span })
const num = n => cell(String(n), 'num')
const blank = () => cell('')
// rows whose C..K range is one merged note
const note = (n, h, no, text) => ({ n, h, cells: [num(no), cell(text, n === 19 ? 'note selected' : 'note', 9), blank()] })

const rows = [
  {
    n: 8,
    h: 30,
    cells: [
      { parts: [['基础信息\n', 'bold'], ['（此处都采用\n选择，无要求\n时可不选）', 'blue']], rows: 3, cls: 'side-cell' },
      num(1), cell('阻焊面次', 'bold left'), cell('双面印', 'light'), cell('互联电阻测试', 'bold', 4),
      cell('无要求', 'yellow light'), cell('板边是否允许漏铜', 'bold'), cell('不允许', 'yellow light'), blank()
    ]
  },
  {
    n: 9,
    h: 30,
    cells: [
      num(2), { parts: [['是否加', 'blue'], ['追溯号', 'red']], cls: 'bold', span: 2 }, cell('不允许加', 'orange light remark', 2),
      cell('标记指定添加位置', 'bold', 2), cell('无要求', 'light remark'), blank(), blank(), blank()
    ]
  },
  {
    n: 10,
    h: 44,
    cells: [
      num(3), { parts: [['最小孔铜', 'red'], ['要求\n（um）', '']], cls: 'bold left' }, cell('无要求', 'yellow light remark', 2),
      { parts: [['客户要求外层完成', ''], ['铜厚', 'red'], ['（um）', '']], cls: 'bold', span: 3 },
      cell('≥35', 'yellow light remark'), blank(), blank(), blank()
    ]
  },
  {
    n: 11,
    h: 30,
    cells: [
      { parts: [['顾客要求与文\n件设计不一致\n需要CAM更\n改的信息指示\n', 'bold'], ['(这部分信息\n客诉的风险最\n高)', 'blue']], rows: 16, cls: 'side-cell' },
      num(1), cell('10mil的过孔阻焊塞孔制作', 'note', 9), blank()
    ]
  },
  {
    n: 12,
    h: 30,
    cells: [
      num(2), cell('四周加5mm工艺边，单元板和工艺边铣槽2mm，在合适添加桥连位和邮票孔，工艺边上常规添加mark点和工艺孔', 'note', 9),
      { link: '图1!A1', cls: 'link-cell' }
    ]
  },
  note(13, 30, 3, 'PTH+/-0.075mm，NPTH +/-0.05mm，槽孔公差+/-0.1mm，82.67mil的孔按＋3.937/-0mil制作'),
  note(14, 37, 4, '文件内2.8mm的孔更改为2.7mm制作'),
  note(15, 30, 5, ''),
  { n: 16, h: 46, cells: [cell('外层线路、字符、阻焊指示', 'section', 11)] },
  note(17, 29, 1, '打孔图中标注R1的圆角以实际文件为准'),
  note(18, 29, 2, '顶层丝印20260203-00XX，XX为序列号，20260203-0001、20260203-0002、20260203-0003、、、依次顺延'),
  note(19, 29, 3, '顶底层丝印序列号：AM782620155AM25361702800000027~00000034'),
  note(20, 29, 4, '序号标识：00000027~00000034'),
  note(21, 44, 5, '40欧姆的单端阻抗按±7%，±3Ω欧姆控制；\n对应流程备注40Ω阻抗线宽测量要求；'),
  note(22, 44, 6, '在空白处丝印序列号，001.002.003向后递增'),
  note(23, 29, 7, '接受内外层削后孔环不满足国军标要求'),
  note(24, 29, 8, ''),
  note(25, 29, 9, ''),
  note(26, 29, 10, ''),
  {
    n: 27,
    h: 50,
    cells: [
      blank(), blank(), cell('有效单次报废', 'beige'), cell('', 'olive remark'),
      cell('交货数量≤5快　允许1块报废；5＜交货数量≤10快　允许2块报废；10＜交货数量　允许Set中有20%报废　交货满足总片', 'beige left upper', 7), blank()
    ]
  }
]
</script>

<style>
body {
  margin: 0;
  background: #000;
}
</style>

<style scoped>
.desktop {
  position: relative;
  display: flex;
  flex-direction: column;
  height: 100vh;
  overflow: hidden;
  background: #000;
  font-family: "Open Sans", "Noto Sans CJK SC", sans-serif;
}

button,
input,
select {
  font: inherit;
  color: inherit;
  margin: 0;
  padding: 0;
  border: 0;
  background: none;
}

svg {
  display: block;
}

/* ---- main title bar ---- */
.titlebar {
  display: flex;
  align-items: center;
  flex: none;
  height: 23px;
  background: #fff;
  color: #8a8a8a;
}

.titlebar-icon {
  width: 16px;
  height: 16px;
  margin: 0 6px 0 1px;
}

.titlebar-text {
  flex: 1;
  font-size: 16px;
  line-height: 22px;
  white-space: nowrap;
}

.win-controls {
  display: flex;
  padding-right: 2px;
}

.win-controls button {
  width: 46px;
  height: 23px;
  display: flex;
  align-items: center;
  justify-content: center;
}

.win-controls svg,
.popup-title svg {
  width: 12px;
  height: 12px;
  fill: none;
  stroke: #000;
}

.win-controls-muted svg,
.popup-title svg {
  stroke: #8a8a8a;
}

/* ---- menu bar ---- */
.menubar {
  display: flex;
  flex: none;
  height: 56px;
}

.menu-panel,
.brand-panel {
  display: flex;
  align-items: center;
  box-sizing: border-box;
  background: #9bdbda;
  border: 2px solid;
  border-color: #5c7f80 #d2f4f2 #d2f4f2 #5c7f80;
  box-shadow: inset 2px 2px #c4efed, inset -2px -2px #5c8484;
}

.menu-panel {
  flex: 1;
  gap: 17px;
  padding: 0 14px 2px;
}

.menu-item {
  font-family: "Liberation Serif", serif;
  font-size: 14px;
  font-weight: bold;
  color: #000;
}

.menu-item u {
  text-underline-offset: 3px;
}

.menu-help {
  margin-left: auto;
}

.brand-panel {
  width: 414px;
  box-shadow: inset 2px 2px #c4efed;
  padding-left: 4px;
  color: #000;
}

.brand-logo {
  width: 162px;
  height: 40px;
  flex: none;
}

.brand-logo text {
  font: italic bold 32px "Liberation Sans", sans-serif;
  fill: #0a0a80;
}

.brand-name {
  display: flex;
  flex-direction: column;
  align-items: center;
  gap: 4px;
  width: 136px;
  padding-bottom: 2px;
  font-family: "Liberation Serif", serif;
  white-space: nowrap;
}

.brand-name strong {
  font-size: 24px;
  line-height: 26px;
}

.brand-name em {
  font-size: 14px;
  font-weight: bold;
  line-height: 18px;
}

.brand-date {
  flex: 1;
  align-self: flex-start;
  padding-top: 4px;
  text-align: center;
  font: italic bold 15px/15px "Liberation Mono", monospace;
}

/* ---- workspace ---- */
.workspace {
  display: flex;
  flex: 1;
  min-height: 0;
}

.side {
  display: flex;
  flex-direction: column;
  width: 155px;
  flex: none;
  box-sizing: border-box;
  padding: 3px 2px 0 3px;
  background: #52cbae;
  font: bold 15px/18px "Liberation Mono", monospace;
  color: #000;
  white-space: nowrap;
}

.side-box {
  flex: none;
  height: 17px;
  border: 1px solid #000;
  background: #9bdbda;
  padding-left: 1px;
}

.side-matrix {
  flex: none;
  margin-top: 2px;
  padding: 2px;
  border: 1px solid #000;
}

.side-matrix button {
  display: block;
  width: 100%;
  height: 20px;
  text-align: left;
  padding-left: 2px;
  background: #9bdbda;
  border: 2px solid;
  border-color: #c8f4f0 #4d8785 #4d8785 #c8f4f0;
}

.side-layers {
  display: flex;
  flex: 1;
  min-height: 0;
  justify-content: space-between;
  margin-top: 6px;
}

.layer-frame {
  display: flex;
  width: 124px;
  overflow: hidden;
  border-right: 3px solid #9ef0de;
  box-shadow: inset 2px 2px #2e6f60;
}

.layer-list {
  width: 117px;
  height: 100%;
  overflow: hidden;
  margin-left: 3px;
  padding-top: 6px;
  box-sizing: border-box;
}

.layer-group {
  background: #000;
  padding: 0 2px;
  margin-bottom: 5px;
}

.layer {
  display: flex;
  gap: 2px;
  height: 16px;
}

.layer-check,
.layer-swatch {
  display: flex;
  align-items: center;
  justify-content: center;
  width: 14px;
  height: 14px;
  margin: 1px 0;
  background: #fff;
}

.layer-check-on {
  background: #00108a;
}

.layer-check input {
  appearance: none;
  box-sizing: border-box;
  width: 10px;
  height: 10px;
  border: 2px solid #000;
  background: #fff;
}

.layer-name {
  flex: 1;
  display: flex;
  justify-content: space-between;
  height: 14px;
  margin: 1px 0;
  padding: 0 2px;
  font-size: 12px;
  line-height: 14px;
}

.layer-name i {
  font: 9px/14px "DejaVu Sans", sans-serif;
}

.layer-white { background: #fff; }
.layer-green { background: #00a37c; }
.layer-amber { background: #ffc64a; }
.layer-slate { background: #97b3bd; }
.layer-grey { background: #d8d8d8; }
.layer-teal { background: #9bdbda; }

.side-scroll {
  display: flex;
  flex-direction: column;
  width: 13px;
  border-left: 2px solid #2e6f60;
  border-right: 2px solid #9ef0de;
  background: #3fa990;
}

.side-scroll svg {
  width: 12px;
  height: 14px;
}

.side-thumb {
  flex: 9;
  background: #52cbae;
  border: 2px solid;
  border-color: #9ef0de #2e6f60 #2e6f60 #9ef0de;
}

.side-trough {
  flex: 1;
}

.side-status {
  flex: none;
  height: 9px;
  margin-top: 4px;
  overflow: hidden;
  border: 2px solid #000;
  border-bottom: 0;
  background: #ffc64a;
  font-size: 14px;
  line-height: 14px;
  padding-left: 1px;
}

.board {
  flex: 1;
  min-width: 0;
  height: 100%;
  background: #000;
}

.trace path { fill: none; stroke: #001eff; stroke-width: 4; }
.pad { fill: #001eff; }
.silk { fill: none; stroke: #459203; stroke-width: 2; }
.silk-thin { fill: none; stroke: #4f8c1c; stroke-width: 1; }
.silk-fill { fill: #459203; font: 17px "DejaVu Sans", sans-serif; }
.board-title { font-size: 36px; }
.serial { fill: #e01010; font: 25px "DejaVu Sans", sans-serif; }

/* ---- right tools ---- */
.tools {
  display: flex;
  flex-direction: column;
  width: 163px;
  flex: none;
  font: bold 15px/26px "Liberation Mono", monospace;
  color: #000;
}

.tool-grid {
  display: grid;
  grid-template-columns: repeat(4, 38px);
  gap: 2px;
  padding: 3px 2px 6px;
  background: #000;
  border-top: 1px solid #2e6f60;
  border-right: 3px solid #9bdbda;
}

.tool {
  height: 38px;
  display: flex;
  align-items: center;
  justify-content: center;
  background: #9bdbda;
  border: 3px solid;
  border-color: #c8f4f0 #5c8484 #5c8484 #c8f4f0;
}

.tool svg {
  width: 28px;
  height: 28px;
}

.tool-red {
  border-color: #d01818;
}

.popup-title {
  display: flex;
  justify-content: flex-end;
  height: 30px;
  padding-right: 9px;
  background: #fff;
}

.popup-rows {
  background: #9bdbda;
}

.popup-row {
  box-sizing: border-box;
  height: 29px;
  border: 2px solid #000;
  border-width: 1px 2px 1px 0;
  padding-left: 140px;
}

.popup-row-short {
  height: 16px;
}

.popup-row span {
  display: block;
  width: 18px;
}

.popup-foot {
  padding: 33px 0 2px;
  background: #52cbae;
}

.popup-foot button {
  display: block;
  width: 160px;
  height: 26px;
  background: #9bdbda;
  border: 3px solid;
  border-color: #c8f4f0 #4d8785 #4d8785 #c8f4f0;
}

.tools-board {
  flex: 1;
  min-height: 0;
  overflow: hidden;
  background: #000;
  border-right: 2px solid #9bdbda;
}

.tools-board svg {
  width: 100%;
  height: 300px;
}

.tools-foot {
  height: 31px;
  background: #52cbae;
  border-top: 2px solid #9ef0de;
  padding-left: 139px;
  line-height: 50px;
  overflow: hidden;
}

/* ---- excel window ---- */
.excel {
  position: absolute;
  left: 747px;
  right: 23px;
  top: 146px;
  bottom: 0;
  display: flex;
  flex-direction: column;
  background: #bfdbff;
  color: #15428b;
  font-family: "Noto Sans CJK SC", sans-serif;
}

.x-title {
  position: relative;
  display: flex;
  align-items: center;
  flex: none;
  height: 34px;
  background: #fff;
}

.office {
  position: absolute;
  left: 5px;
  top: 9px;
  width: 46px;
  height: 46px;
  z-index: 2;
}

.qat {
  display: flex;
  align-items: center;
  gap: 9px;
  box-sizing: border-box;
  width: 71px;
  height: 26px;
  margin: 4px 0 0 51px;
  padding-left: 15px;
  border: 1px solid #b8bcc4;
  border-left: 0;
  border-radius: 0 13px 13px 0;
  background: #f8f9fb;
}

.qat svg {
  width: 16px;
  height: 16px;
}

.qat-more {
  margin: 4px 0 0 6px;
}

.qat-more svg {
  width: 10px;
  height: 10px;
}

.x-title-text {
  position: absolute;
  left: 0;
  right: 0;
  top: 5px;
  text-align: center;
  font: 16px/24px "Open Sans", "Noto Sans CJK SC", sans-serif;
  color: #000;
  pointer-events: none;
}

.x-title .win-controls {
  margin-left: auto;
  padding-right: 1px;
}

.x-tabs {
  display: flex;
  flex: none;
  gap: 8px;
  height: 29px;
  padding-left: 61px;
  padding-right: 7px;
}

.x-tab {
  box-sizing: border-box;
  padding: 0 11px;
  font-size: 15px;
  line-height: 26px;
  border: 1px solid transparent;
  border-width: 1px 0 0;
}

.x-tab-on {
  background: #e9f2fd;
  border-color: #8db2e3;
  border-radius: 3px 3px 0 0;
  box-shadow: 0 0 3px #8db2e3;
}

.x-tabs-right {
  display: flex;
  align-items: center;
  gap: 12px;
  margin-left: auto;
}

.x-tabs-right svg {
  width: 14px;
  height: 14px;
}

.ribbon {
  display: flex;
  flex: none;
  gap: 4px;
  box-sizing: border-box;
  height: 122px;
  margin: 0 3px 0 2px;
  padding: 2px;
  background: linear-gradient(#dbe6f4 0, #c9d9ed 20px, #dcecfb 100%);
  border: 1px solid #8db2e3;
  border-radius: 0 3px 3px 3px;
}

.group {
  display: flex;
  flex-direction: column;
  box-sizing: border-box;
  height: 116px;
  flex: none;
  overflow: hidden;
  border: 1px solid #a5c3e6;
  border-radius: 3px;
  background: linear-gradient(#dde8f5 0, #d3e0f0 15px, #c8d9ed 16px, #e0ecf9 100%);
}

.group-clip { width: 83px; }
.group-font { width: 272px; }
.group-align { width: 271px; }
.group-number { width: 157px; }
.group-style { width: 198px; }
.group-cells { width: 79px; }
.group-edit { width: 146px; }

.group-body {
  flex: 1;
  display: flex;
  padding: 0 3px;
}

.group-label {
  position: relative;
  height: 22px;
  text-align: center;
  font-size: 15px;
  line-height: 21px;
  color: #3e6aaa;
  background: #c2d9f1;
}

.group-clip .group-label {
  padding-right: 24px;
}

.launcher {
  position: absolute;
  right: 6px;
  top: 5px;
  width: 8px;
  height: 8px;
  border-left: 1px solid #6f8fb8;
  border-top: 1px solid #6f8fb8;
}

.launcher::after {
  content: "";
  position: absolute;
  right: 0;
  bottom: 0;
  width: 4px;
  height: 4px;
  border-right: 2px solid #6f8fb8;
  border-bottom: 2px solid #6f8fb8;
}

.group-rows {
  display: flex;
  flex-direction: column;
  gap: 11px;
  padding-top: 13px;
}

.group-body .group-rows {
  padding-right: 4px;
}

.group-divided {
  margin-top: 5px;
  padding-top: 8px;
  padding-left: 3px;
  border-left: 1px solid #8fb0d8;
  margin-bottom: 4px;
}

.tool-row {
  display: flex;
  align-items: flex-start;
  gap: 3px;
  height: 29px;
}

.bar {
  display: flex;
  height: 24px;
  border: 1px solid #9ab6dc;
  border-radius: 2px;
  background: linear-gradient(#d9e6f5, #c5d8ef 50%, #d4e3f5);
}

.bar button {
  display: flex;
  align-items: center;
  justify-content: center;
  gap: 6px;
  color: #111;
  font-size: 14px;
}

.bar button + button {
  border-left: 1px solid #b4cae6;
}

.b26 { width: 26px; }
.b28 { width: 27px; }
.b36 { width: 36px; }
.b38 { width: 38px; }
.b39 { width: 39px; }

.bar .serif {
  gap: 0;
  font: bold 17px "Liberation Serif", serif;
}

.bar .serif-s {
  font-size: 14px;
}

.serif sup {
  font: 9px "DejaVu Sans", sans-serif;
  align-self: flex-start;
  color: #2a5caa;
}

.b38.serif .caret {
  margin-left: 8px;
}

.bar .decimals {
  flex-direction: column;
  gap: 0;
  font: bold 9px/9px "Liberation Sans", sans-serif;
}

.on {
  background: linear-gradient(#fbd7a0, #fdb95c 45%, #fda63a 50%, #ffe28a);
}

.wide {
  display: flex;
  align-items: center;
  gap: 4px;
  box-sizing: border-box;
  height: 26px;
  padding: 0 3px;
  border: 1px solid #c0914e;
  border-radius: 2px;
  font-size: 15px;
  white-space: nowrap;
}

.icon {
  flex: none;
  width: 16px;
  height: 16px;
}

.icon-w {
  width: 20px;
  height: 20px;
}

.icon-big {
  width: 30px;
  height: 30px;
}

.caret {
  display: inline-block;
  flex: none;
  width: 0;
  height: 0;
  border: 3px solid transparent;
  border-top-color: #4f74ad;
  border-bottom: 0;
  vertical-align: middle;
}

.caret-dark {
  border-width: 4px;
  border-bottom: 0;
  border-top-color: #000;
}

.combo-pair {
  display: flex;
}

.combo {
  display: flex;
  align-items: center;
  box-sizing: border-box;
  height: 29px;
  padding: 0 4px 2px 2px;
  border: 1px solid #abc4e6;
  background: #eaf2fb;
  color: #000;
}

.combo select {
  flex: 1;
  min-width: 0;
  appearance: none;
  font: 15px "Noto Sans CJK SC", sans-serif;
}

.combo-font { width: 151px; }
.combo-size { width: 56px; padding-left: 4px; }
.combo-number { width: 150px; }

.big {
  display: flex;
  flex-direction: column;
  align-items: center;
  justify-content: flex-start;
  box-sizing: border-box;
  width: 50px;
  padding-top: 9px;
  font-size: 15px;
  line-height: 20px;
  text-align: center;
  white-space: nowrap;
}

.big > span {
  margin-top: 8px;
}

.big > .caret {
  margin-top: 7px;
}

.big span .caret {
  margin-left: 5px;
}

.group-bigs .big {
  width: auto;
}

.group-bigs {
  gap: 6px;
}

.small-col {
  display: flex;
  flex-direction: column;
  gap: 10px;
  padding: 6px 0 0 4px;
}

.small-col-text {
  gap: 6px;
  padding: 4px 0 0 4px;
}

.small-col-text button {
  display: flex;
  align-items: center;
  gap: 5px;
  height: 20px;
  font-size: 15px;
  line-height: 20px;
}

.small-col-text .caret {
  margin-left: 3px;
}

.formula-bar {
  display: flex;
  flex: none;
  box-sizing: border-box;
  height: 20px;
  margin: 2px 1px 2px 2px;
  border: 1px solid #6c93c7;
  border-width: 1px 0;
  background: #fff;
  font: 14px/18px "Liberation Mono", "Noto Sans CJK SC", monospace;
  color: #000;
}

.name-box {
  display: flex;
  align-items: center;
  width: 157px;
  padding-right: 3px;
  box-sizing: border-box;
}

.name-box input {
  flex: 1;
  min-width: 0;
  text-align: center;
}

.fx {
  display: flex;
  align-items: center;
  justify-content: space-between;
  box-sizing: border-box;
  width: 77px;
  padding: 0 6px 0 4px;
  border-right: 1px solid #6c93c7;
  border-radius: 10px 0 0 10px;
  background: linear-gradient(#e8f0fa, #b4cbe9);
}

.fx b {
  width: 9px;
  height: 9px;
  border-radius: 50%;
  background: #a9b9d0;
}

.fx em {
  font: italic bold 15px "Liberation Serif", serif;
  color: #444;
}

.formula {
  flex: 1;
  min-width: 0;
  padding-left: 12px;
}

.formula-more {
  display: flex;
  align-items: center;
  justify-content: center;
  width: 15px;
  background: #d2e1f4;
  border-left: 1px solid #6c93c7;
}

.formula-more svg {
  width: 8px;
  height: 10px;
}

/* ---- worksheet ---- */
.sheet {
  display: flex;
  flex: 1;
  min-height: 0;
}

.grid-area {
  position: relative;
  flex: 1;
  min-width: 0;
  overflow: hidden;
  background: #fff;
  border-top: 1px solid #6c93c7;
}

/* column L runs on under the scroll bar */
.grid {
  width: calc(100% + 25px);
  table-layout: fixed;
  border-collapse: separate;
  border-spacing: 0;
  color: #000;
}

.grid th {
  box-sizing: border-box;
  padding: 0;
  font: 16px/18px "Liberation Serif", serif;
  color: #1f3a4a;
  border-right: 1px solid #9eb6ce;
  border-bottom: 1px solid #9eb6ce;
}

.grid thead th {
  height: 20px;
  background: linear-gradient(#f6f9fc, #d3dbe9);
}

.grid thead .picked {
  background: linear-gradient(#f8d693, #f2bf5e);
  border-color: #f29536;
}

.grid .corner {
  background: #a9c4e9;
}

.corner i {
  display: block;
  width: 0;
  height: 0;
  margin: 0 4px 0 auto;
  border: 6px solid;
  border-color: transparent #e4ecf7 #e4ecf7 transparent;
}

.grid tbody th {
  background: #e4ecf7;
  vertical-align: bottom;
}

.grid tbody .picked {
  background: #ffd58d;
  border-color: #f29536;
}

.grid td {
  position: relative;
  box-sizing: border-box;
  padding: 0 3px;
  border-right: 1px solid #000;
  border-bottom: 1px solid #000;
  text-align: center;
  font-size: 15px;
  line-height: 19px;
  white-space: pre;
}

.grid td:last-child {
  border-right: 0;
}

.grid td.side-cell {
  padding: 0;
}

.grid .bold { font-weight: bold; }
.grid .light { color: #333; }
.grid .left { text-align: left; }
.grid .upper { vertical-align: top; padding-top: 9px; }
.grid .blue { color: #1c1ccc; }
.grid .red { color: #e00000; }
.grid .yellow { background: #ffff00; }
.grid .orange { background: #ffc000; }
.grid .beige { background: #eeebe0; }
.grid .olive { background: #d6e2b8; }

.grid .num {
  font-size: 16px;
  font-weight: bold;
}

.grid .note {
  text-align: left;
  font-family: "Liberation Sans", "Noto Sans CJK SC", sans-serif;
  font-size: 13px;
  font-weight: bold;
  line-height: 17px;
  text-spacing-trim: space-all;
  color: #e01010;
}

.grid .section {
  padding-left: 236px;
  font-size: 16px;
  font-weight: bold;
  background: #e4dfec;
}

.grid .link-cell {
  text-align: left;
  background: #92d050;
  font: 16px/18px "Liberation Serif", "Noto Sans CJK SC", serif;
}

.link-cell a {
  color: #800080;
}

.remark::after {
  content: "";
  position: absolute;
  top: 0;
  right: 0;
  border: 3px solid;
  border-color: #e00000 #e00000 transparent transparent;
}

/* white line over the cell border, black on both sides of it */
.selected::before {
  content: "";
  position: absolute;
  inset: -1px;
  border: 1px solid #fff;
  outline: 1px solid #000;
  box-shadow: inset 0 0 0 1px #000;
  z-index: 1;
}

.selected::after {
  content: "";
  position: absolute;
  right: -3px;
  bottom: -3px;
  width: 5px;
  height: 5px;
  background: #000;
  outline: 1px solid #fff;
  z-index: 1;
}

/* annotation arrow lies over the cells */
.arrow {
  position: absolute;
  left: 39px;
  top: 291px;
  width: 200px;
  height: 100px;
  z-index: 2;
  pointer-events: none;
}

.vscroll {
  display: flex;
  flex-direction: column;
  width: 16px;
  margin-right: 1px;
  box-sizing: border-box;
  background: linear-gradient(90deg, #a0bce0, #6f93c4 20%, #7d9fce);
  flex: none;
}

.vscroll-split {
  height: 6px;
  border: 1px solid #6c93c7;
  background: #eef4fb;
}

.vscroll-up {
  width: 0;
  height: 0;
  margin: 9px auto 49px;
  border: 4px solid transparent;
  border-bottom: 5px solid #3d5579;
  border-top: 0;
}

.vscroll-thumb {
  display: flex;
  align-items: center;
  justify-content: center;
  box-sizing: border-box;
  height: 192px;
  border: 1px solid #5f7fb0;
  border-radius: 2px;
  background: linear-gradient(90deg, #f3f7fb, #c3cfdf);
}

.vscroll-thumb i {
  width: 8px;
  height: 7px;
  background: repeating-linear-gradient(#7c8ea8 0 1px, transparent 1px 3px);
}

.vscroll-down {
  width: 0;
  height: 0;
  margin: auto auto 6px;
  border: 4px solid transparent;
  border-top: 5px solid #3d5579;
  border-bottom: 0;
}

.sheet-tabs {
  flex: none;
  height: 2px;
  background: #5a80b8;
  border-top: 1px solid #a9c4e9;
  box-sizing: border-box;
}
</style>
